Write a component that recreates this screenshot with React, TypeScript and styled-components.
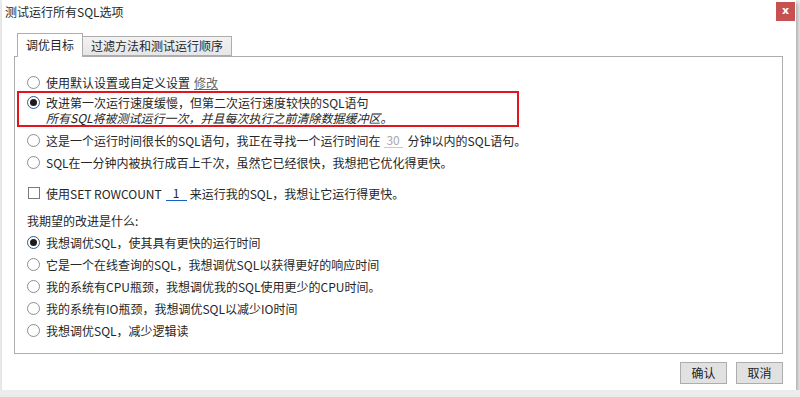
import React from "react";
import styled, { createGlobalStyle } from "styled-components";

const GlobalStyle = createGlobalStyle`
  html, body {
    margin: 0;
    padding: 0;
    background: #ececec;
    font-family: "Noto Sans CJK SC", "Noto Sans", sans-serif;
    font-size: 12px;
    color: #262626;
  }
  * { box-sizing: border-box; }
`;

const Dialog = styled.div`
  width: 794px;
  height: 390px;
  margin-left: 2px;
  background: #fff;
  box-shadow: 2px 3px 4px rgba(0, 0, 0, 0.28);
  display: flex;
  flex-direction: column;
`;

const TitleBar = styled.div`
  height: 26px;
  display: flex;
  justify-content: space-between;
  align-items: flex-start;
  padding-left: 3px;
`;

const Title = styled.div`
  line-height: 24px;
  font-size: 12px;
  color: #262626;
`;

const CloseButton = styled.div`
  width: 19px;
  height: 19px;
  margin-top: 2px;
  margin-right: 1px;
  background: #c75050;
  color: #fff;
  font-family: "DejaVu Sans", sans-serif;
  font-weight: bold;
  font-size: 11px;
  line-height: 18px;
  text-align: center;
`;

const Body = styled.div`
  padding: 7px 13px 0 12px;
  display: flex;
  flex-direction: column;
`;

const TabBar = styled.div`
  display: flex;
  align-items: flex-end;
  padding-left: 3px;
  height: 23px;
  position: relative;
  z-index: 1;
`;

const Tab = styled.div<{ $active?: boolean }>`
  height: ${(p) => (p.$active ? "24px" : "20px")};
  margin-bottom: ${(p) => (p.$active ? "-1px" : "0")};
  padding: 0 8px;
  border: 1px solid #adadad;
  border-bottom: ${(p) => (p.$active ? "none" : "1px solid #adadad")};
  border-left: ${(p) => (p.$active ? "1px solid #adadad" : "none")};
  background: ${(p) => (p.$active ? "#fff" : "linear-gradient(#f2f2f2, #e6e6e6)")};
  line-height: ${(p) => (p.$active ? "22px" : "18px")};
  color: #262626;
  white-space: nowrap;
`;

const Panel = styled.div`
  height: 298px;
  border: 1px solid #adadad;
  padding: 14px 12px 0 12px;
  display: flex;
  flex-direction: column;
`;

const Row = styled.div<{ $h?: number; $mt?: number }>`
  height: ${(p) => p.$h ?? 22}px;
  margin-top: ${(p) => p.$mt ?? 0}px;
  display: flex;
  align-items: center;
  white-space: nowrap;
  color: #262626;
`;

const RadioCircle = styled.span<{ $checked?: boolean }>`
  width: 13px;
  height: 13px;
  border-radius: 50%;
  border: 1px solid ${(p) => (p.$checked ? "#2d5b8c" : "#8e8e8e")};
  background: #fff;
  margin-right: 6px;
  flex: none;
  display: flex;
  align-items: center;
  justify-content: center;
  &::after {
    content: "";
    width: 7px;
    height: 7px;
    border-radius: 50%;
    background: ${(p) => (p.$checked ? "#1b1b1b" : "transparent")};
  }
`;

const CheckBox = styled.span`
  width: 12px;
  height: 12px;
  border: 1px solid #7a7a7a;
  background: #fff;
  margin: 0 6px 0 1px;
  flex: none;
`;

const Highlight = styled.div`
  position: relative;
  display: flex;
  flex-direction: column;
  &::after {
    content: "";
    position: absolute;
    left: -10px;
    top: -2px;
    width: 498px;
    bottom: -2px;
    border: 2px solid #e3141d;
    pointer-events: none;
  }
`;

const ItalicLine = styled.div`
  height: 14px;
  line-height: 14px;
  padding-left: 19px;
  font-style: italic;
  color: #262626;
  white-space: nowrap;
`;

const Link = styled.span`
  margin-left: 4px;
  color: #666;
  text-decoration: underline;
`;

const Field = styled.span<{ $blue?: boolean }>`
  display: inline-block;
  width: ${(p) => (p.$blue ? "21px" : "19px")};
  margin: ${(p) => (p.$blue ? "0 3px 0 4px" : "0 5px 0 3px")};
  border-bottom: 1px solid ${(p) => (p.$blue ? "#1a5fc4" : "#c8c8c8")};
  text-align: center;
  line-height: 15px;
  color: ${(p) => (p.$blue ? "#262626" : "#a8a8a8")};
`;

const SectionLabel = styled.div`
  height: 21px;
  margin-top: 6px;
  line-height: 21px;
  color: #262626;
`;

const Footer = styled.div`
  display: flex;
  justify-content: flex-end;
  gap: 9px;
  margin-top: 8px;
`;

const Button = styled.div`
  width: 47px;
  height: 22px;
  border: 1px solid #adadad;
  background: #e1e1e1;
  text-align: center;
  line-height: 20px;
  color: #222;
  font-size: 12px;
`;

type Opt = { text: string; checked?: boolean };

const goals: Opt[] = [
  { text: "我想调优SQL，使其具有更快的运行时间", checked: true },
  { text: "它是一个在线查询的SQL，我想调优SQL以获得更好的响应时间" },
  { text: "我的系统有CPU瓶颈，我想调优我的SQL使用更少的CPU时间。" },
  { text: "我的系统有IO瓶颈，我想调优SQL以减少IO时间" },
  { text: "我想调优SQL，减少逻辑读" },
];

export default function App() {
  return (
    <>
      <GlobalStyle />
      <Dialog>
        <TitleBar>
          <Title>测试运行所有SQL选项</Title>
          <CloseButton>x</CloseButton>
        </TitleBar>
        <Body>
          <TabBar>
            <Tab $active>调优目标</Tab>
            <Tab>过滤方法和测试运行顺序</Tab>
          </TabBar>
          <Panel>
            <Row>
              <RadioCircle />
              使用默认设置或自定义设置<Link>修改</Link>
            </Row>
            <Highlight>
              <Row $h={18}>
                <RadioCircle $checked />
                改进第一次运行速度缓慢，但第二次运行速度较快的SQL语句
              </Row>
              <ItalicLine>所有SQL将被测试运行一次，并且每次执行之前清除数据缓冲区。</ItalicLine>
            </Highlight>
            <Row $mt={4}>
              <RadioCircle />
              这是一个运行时间很长的SQL语句，我正在寻找一个运行时间在<Field>30</Field>分钟以内的SQL语句。
            </Row>
            <Row>
              <RadioCircle />
              SQL在一分钟内被执行成百上千次，虽然它已经很快，我想把它优化得更快。
            </Row>
            <Row $mt={9}>
              <CheckBox />
              使用SET ROWCOUNT<Field $blue>1</Field>来运行我的SQL，我想让它运行得更快。
            </Row>
            <SectionLabel>我期望的改进是什么:</SectionLabel>
            {goals.map((g) => (
              <Row key={g.text}>
                <RadioCircle $checked={g.checked} />
                {g.text}
              </Row>
            ))}
          </Panel>
          <Footer>
            <Button>确认</Button>
            <Button>取消</Button>
          </Footer>
        </Body>
      </Dialog>
    </>
  );
}
